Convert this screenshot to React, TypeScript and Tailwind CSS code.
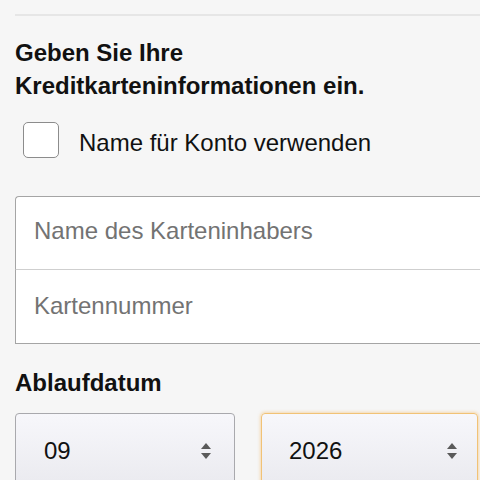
import React from "react";

function Arrows() {
  return (
    <svg width="12" height="18" viewBox="0 0 12 18" className="shrink-0">
      <path d="M6 1 L11 7 L1 7 Z" fill="#5a5a5a" />
      <path d="M6 17 L11 11 L1 11 Z" fill="#5a5a5a" />
    </svg>
  );
}

export default function App() {
  return (
    <div className="w-[480px] h-[480px] overflow-hidden bg-[#f6f6f6] font-['Liberation_Sans',Arial,sans-serif] text-[#111]">
      <div className="pl-[15px] pt-[14px]">
        <div className="h-[2px] bg-[#e6e6e6]" />
        <h2 className="mt-[20px] text-[24px] font-bold leading-[33px] text-[#111]">
          Geben Sie Ihre
          <br />
          Kreditkarteninformationen ein.
        </h2>
        <label className="mt-[20px] ml-[8px] flex items-center gap-[20px]">
          <span className="w-[36px] h-[36px] rounded-[5px] border-[1.5px] border-[#8c8c8c] bg-white shrink-0" />
          <span className="text-[24px] leading-[28px] pt-[5px] text-[#111]">Name für Konto verwenden</span>
        </label>
        <div className="mt-[38px] w-[480px] flex flex-col">
          <div className="h-[74px] rounded-tl-[4px] border border-r-0 border-[#a5a5a5] border-b-[#cfcfcf] bg-white flex items-center pl-[18px] pb-[4px]">
            <span className="text-[24px] text-[#737373]">Name des Karteninhabers</span>
          </div>
          <div className="h-[74px] border border-t-0 border-r-0 border-[#a5a5a5] bg-white flex items-center pl-[18px] pb-[2px]">
            <span className="text-[24px] text-[#737373]">Kartennummer</span>
          </div>
        </div>
        <h3 className="mt-[25px] text-[24px] font-bold leading-[28px] text-[#111]">Ablaufdatum</h3>
        <div className="mt-[16px] grid grid-cols-[220px_217px] gap-[26px]">
          <div className="h-[80px] rounded-[4px] border border-[#a9a9ad] bg-gradient-to-b from-[#f7f7fb] to-[#e9e9ee] flex items-start pt-[23px] pl-[28px] pr-[22px] justify-between">
            <span className="text-[24px] leading-[28px] text-[#111]">09</span>
            <span className="mt-[5px]"><Arrows /></span>
          </div>
          <div className="h-[80px] rounded-[4px] border-[1.5px] border-[#f1c276] shadow-[0_0_3px_1px_rgba(245,190,110,0.5)] bg-gradient-to-b from-[#f7f7fb] to-[#e9e9ee] flex items-start pt-[23px] pl-[27px] pr-[19px] justify-between">
            <span className="text-[24px] leading-[28px] text-[#111]">2026</span>
            <span className="mt-[5px]"><Arrows /></span>
          </div>
        </div>
      </div>
    </div>
  );
}
